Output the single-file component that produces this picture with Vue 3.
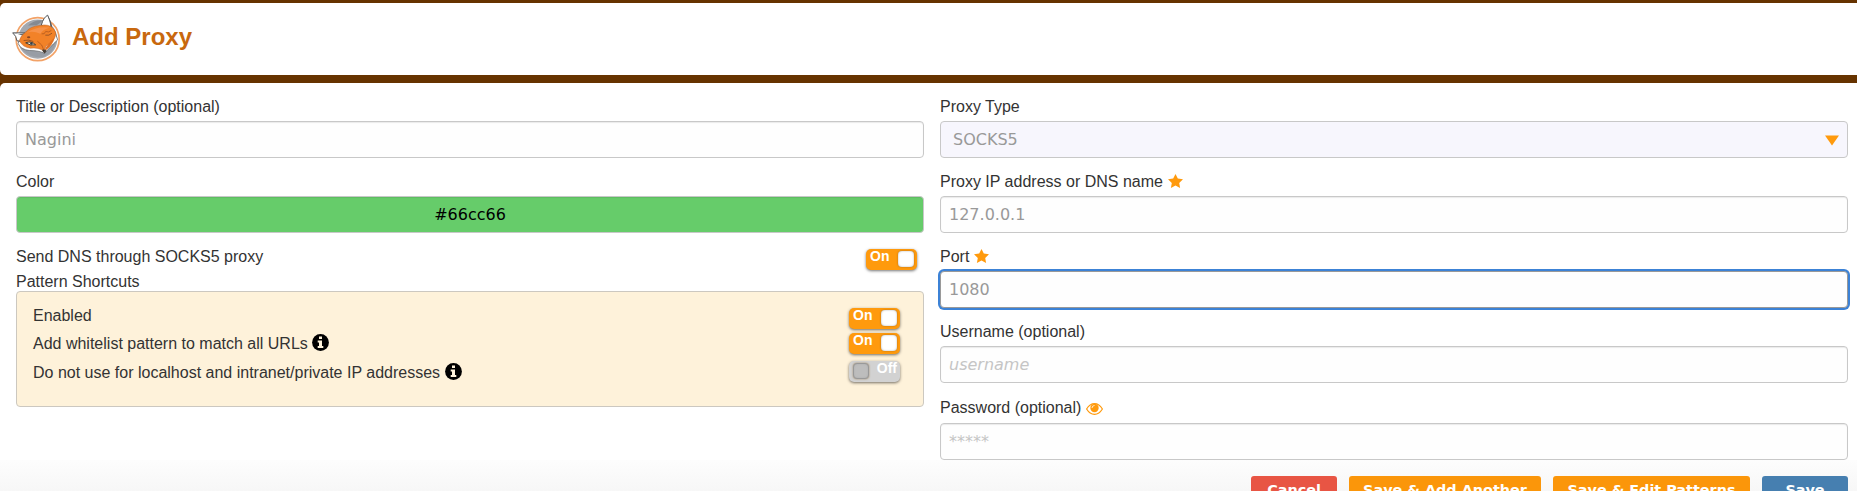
<script setup>
import { ref } from 'vue'

const shortcuts = ref([
  { label: 'Enabled', on: true, info: false },
  { label: 'Add whitelist pattern to match all URLs', on: true, info: true },
  { label: 'Do not use for localhost and intranet/private IP addresses', on: false, info: true },
])

const fields = ref([
  { label: 'Proxy IP address or DNS name', value: '127.0.0.1', star: true },
  { label: 'Port', value: '1080', star: true, focused: true },
  { label: 'Username (optional)', value: 'username', empty: true },
  { label: 'Password (optional)', value: '*****', eye: true, empty: true },
])

const buttons = [
  { label: 'Cancel', kind: 'danger' },
  { label: 'Save & Add Another', kind: 'warn wide' },
  { label: 'Save & Edit Patterns', kind: 'warn wider' },
  { label: 'Save', kind: 'primary' },
]
</script>

<template>
  <div class="page">
    <header class="header">
      <svg class="logo" viewBox="33 42 150 143">
        <circle cx="113" cy="117" r="64.500" fill="#fff" stroke="#f2a267" stroke-width="5" />
        <circle cx="113" cy="117" r="59" fill="#a4a8af" />
        <path d="M84 76Q104 58 130 61L110 75Z" fill="#858a92" />
        <path d="M164 94Q177 125 151 156L138 160L171 119Z" fill="#858b93" />
        <path d="M57 134Q74 151 133 160L171 119Q163 159 129 171Q77 174 57 134Z" fill="#989da5" />
        <path d="M54 129Q61 148 88 151Q118 151 134 160Q145 145 173 119L166 99L151 79L77 95Z" fill="#fff" stroke="#54575c" stroke-width="2" />
        <path d="M38 98L75 98L60 123L51 122Q49 107 38 98Z" fill="#fff" stroke="#55575a" stroke-width="3" />
        <path d="M37 98Q56 105 75 98L68 107Q59 102 37 98Z" fill="#66696d" />
        <path d="M124 75Q130 52 143 45Q151 62 158 91L147 86Z" fill="#fff" stroke="#55575a" stroke-width="3" />
        <path d="M142 45Q157 65 157 91L151 84Q151 61 142 45Z" fill="#5b5e62" />
        <path d="M58 121Q62 106 77 96Q90 78 120 76Q147 70 161 86Q171 97 165 111Q155 128 138 138L132 153Q115 141 91 144Q67 141 58 121Z" fill="#f28228" stroke="#b9632b" stroke-width="1.500" />
        <path d="M79 98Q109 77 149 82Q129 88 121 101Q99 91 79 98Z" fill="#f6924a" />
        <path d="M134 151Q139 133 165 111Q158 134 141 148Z" fill="#e06f20" />
        <path d="M77 128Q93 121 107 134Q91 138 77 128Z" fill="#f5f1df" stroke="#493c31" stroke-width="3" />
        <circle cx="94" cy="130" r="4" fill="#35414b" />
        <path d="M71 121Q85 117 100 124M136 105Q147 108 156 99" fill="none" stroke="#8a4c25" stroke-width="2.500" />
        <ellipse cx="86" cy="111" rx="5" ry="3" fill="#884522" />
        <path d="M125 101Q134 104 137 94Q146 98 154 91M112 123Q128 132 132 151" fill="none" stroke="#a5501d" stroke-width="2" />
        <path d="M126 149Q135 146 140 152L134 160Q129 158 126 149Z" fill="#4b4037" />
      </svg>
      <h1>Add Proxy</h1>
    </header>

    <main class="panel">
      <section class="col">
        <div class="label">Title or Description (optional)</div>
        <div class="input">Nagini</div>
        <div class="label">Color</div>
        <div class="input color">#66cc66</div>
        <div class="dns">
          <span>Send DNS through SOCKS5 proxy</span>
          <span class="toggle"><b>On</b><i></i></span>
        </div>
        <div class="caption">Pattern Shortcuts</div>
        <div class="box">
          <div v-for="s in shortcuts" :key="s.label" class="shortcut">
            <span class="text">{{ s.label }}</span>
            <svg v-if="s.info" class="info" viewBox="0 0 17 17">
              <circle cx="8.500" cy="8.500" r="8.400" fill="#000" />
              <path d="M7 2.500h3v2.600H7zM5.700 6.600H10v5.500h1.300V14H5.700v-1.900H7V8.500H5.700z" fill="#fff4dc" />
            </svg>
            <span class="toggle" :class="{ off: !s.on }"><b>{{ s.on ? 'On' : 'Off' }}</b><i></i></span>
          </div>
        </div>
      </section>

      <section class="col">
        <div class="label">Proxy Type</div>
        <div class="input select">
          <span>SOCKS5</span>
          <svg width="14" height="11" viewBox="0 0 14 11"><path d="M0 0.500H14L7 10.500Z" fill="#ff9a0d" /></svg>
        </div>
        <template v-for="f in fields" :key="f.label">
          <div class="label" :class="{ low: f.eye }">
            <span>{{ f.label }}</span>
            <svg v-if="f.star" class="star" viewBox="0 0 15 14">
              <path d="M7.500 0L9.800 4.600L15 5.300L11.200 8.900L12.100 14L7.500 11.600L2.900 14L3.800 8.900L0 5.300L5.200 4.600Z" fill="#ff9a0d" />
            </svg>
            <svg v-if="f.eye" class="eye" viewBox="0 0 17 12">
              <path d="M.6 6Q3.800 .7 8.500 .7T16.400 6Q13.200 11.300 8.500 11.300T.6 6Z" fill="#fff" stroke="#ff9a0d" stroke-width="1.200" />
              <circle cx="8.500" cy="5" r="4.200" fill="#ff9a0d" />
              <path d="M6 5Q6 2.600 8.500 2.500" fill="none" stroke="#fff" stroke-width=".8" />
            </svg>
          </div>
          <div class="input" :class="{ focused: f.focused, empty: f.empty }">{{ f.value }}</div>
        </template>
      </section>
    </main>

    <footer class="footer">
      <button v-for="b in buttons" :key="b.label" :class="b.kind">{{ b.label }}</button>
    </footer>
  </div>
</template>

<style>
body {
  overflow: hidden;
}
</style>

<style scoped>
.page {
  box-sizing: border-box;
  display: flex;
  flex-direction: column;
  gap: 8px;
  width: 1857px;
  height: 491px;
  padding-top: 3px;
  overflow: hidden;
  position: relative;
  background: #663300;
  color: #333;
  font: 16px/20px "Liberation Sans", Arial, sans-serif;
}
.header {
  box-sizing: border-box;
  flex: none;
  display: flex;
  align-items: flex-start;
  height: 72px;
  padding: 11px 0 0 11px;
  background: #fff;
  border-radius: 5px 0 0 5px;
}
.logo {
  width: 50px;
  height: 48px;
}
h1 {
  margin: 8px 0 0 11px;
  color: #c8680e;
  font-size: 24px;
  line-height: 30px;
}
.panel {
  flex: 1;
  display: flex;
  align-items: flex-start;
  gap: 16px;
  padding: 13px 9px 0 16px;
  background: #fff;
  border-radius: 5px 0 0 0;
}
.col {
  flex: 1;
  min-width: 0;
}
.label {
  box-sizing: border-box;
  display: flex;
  height: 25px;
  padding-top: 1px;
  white-space: nowrap;
}
.label.low {
  height: 27px;
  padding-top: 2px;
}
.input {
  box-sizing: border-box;
  display: flex;
  align-items: center;
  height: 37px;
  margin-bottom: 13px;
  padding: 1px 8px 0;
  border: 1px solid #c8c8c8;
  border-radius: 4px;
  box-shadow: inset 0 1px 1px rgba(0, 0, 0, 0.08);
  background: #fefefe;
  color: #999;
  font-family: "DejaVu Sans", sans-serif;
}
.color {
  justify-content: center;
  background: #66cc6a;
  color: #000;
}
.select {
  justify-content: space-between;
  padding: 1px 8px 0 12px;
  background: #f7f6fd;
  box-shadow: none;
}
.focused {
  border-color: #999;
  box-shadow: 0 0 0 2px #3c82d6;
}
.empty {
  color: #c5c5c5;
  font-style: italic;
}
.dns {
  box-sizing: border-box;
  display: flex;
  justify-content: space-between;
  height: 25px;
  padding: 1px 7px 0 0;
}
.dns .toggle {
  margin-top: 2px;
}
.caption {
  box-sizing: border-box;
  height: 20px;
  padding-top: 1px;
}
.box {
  box-sizing: border-box;
  height: 116px;
  padding: 14px 23px 0 16px;
  border: 1px solid #ccc8c0;
  border-radius: 4px;
  background: #fef2da;
}
.shortcut {
  display: flex;
  height: 28px;
}
.shortcut:nth-child(3) {
  padding-top: 1px;
}
.shortcut .toggle {
  margin: 2px 0 0 auto;
}
.shortcut:nth-child(2) .toggle {
  margin-top: -1px;
}
.shortcut:nth-child(3) .toggle {
  margin-top: -2px;
}
.info {
  width: 17px;
  height: 17px;
  margin-left: 4px;
}
.shortcut:nth-child(3) .info {
  margin-left: 5px;
}
.star {
  width: 15px;
  height: 14px;
  margin: 2px 0 0 5px;
}
.eye {
  width: 17px;
  height: 12px;
  margin: 5px 0 0 5px;
}
.toggle {
  box-sizing: border-box;
  flex: none;
  display: flex;
  justify-content: space-between;
  width: 51px;
  height: 21px;
  padding: 2px 3px 0 4px;
  border-radius: 5px;
  background: #ff9a0d;
  box-shadow: 0 1px 3px rgba(0, 0, 0, 0.55);
  color: #fff;
}
.toggle b {
  font-size: 14px;
  line-height: 11px;
}
.toggle i {
  box-sizing: border-box;
  width: 16px;
  height: 16px;
  border-radius: 4px;
  background: #fff;
  box-shadow: inset 0 0 2px #aaa, 0 0 2px rgba(120, 80, 20, 0.6);
}
.toggle.off {
  flex-direction: row-reverse;
  background: #d2d2d2;
}
.toggle.off i {
  border: 1px solid #999;
  background: #bdbdbd;
}
.footer {
  box-sizing: border-box;
  position: absolute;
  left: 0;
  right: 0;
  bottom: 0;
  display: flex;
  align-items: flex-start;
  justify-content: flex-end;
  gap: 12px;
  height: 31px;
  padding: 16px 9px 0 0;
  background: linear-gradient(#fdfdfd, #f7f7f7);
}
button {
  flex: none;
  width: 86px;
  height: 30px;
  margin: 0;
  padding: 0;
  border: 0;
  border-radius: 3px;
  color: #fff;
  font: bold 14.400px/27px "DejaVu Sans", sans-serif;
  white-space: nowrap;
}
button {
  padding-bottom: 2px;
}
.danger {
  background: #e85544;
}
.warn {
  background: #fb960a;
}
.wide {
  width: 192px;
}
.wider {
  width: 197px;
}
.primary {
  background: #467fb0;
}
</style>
